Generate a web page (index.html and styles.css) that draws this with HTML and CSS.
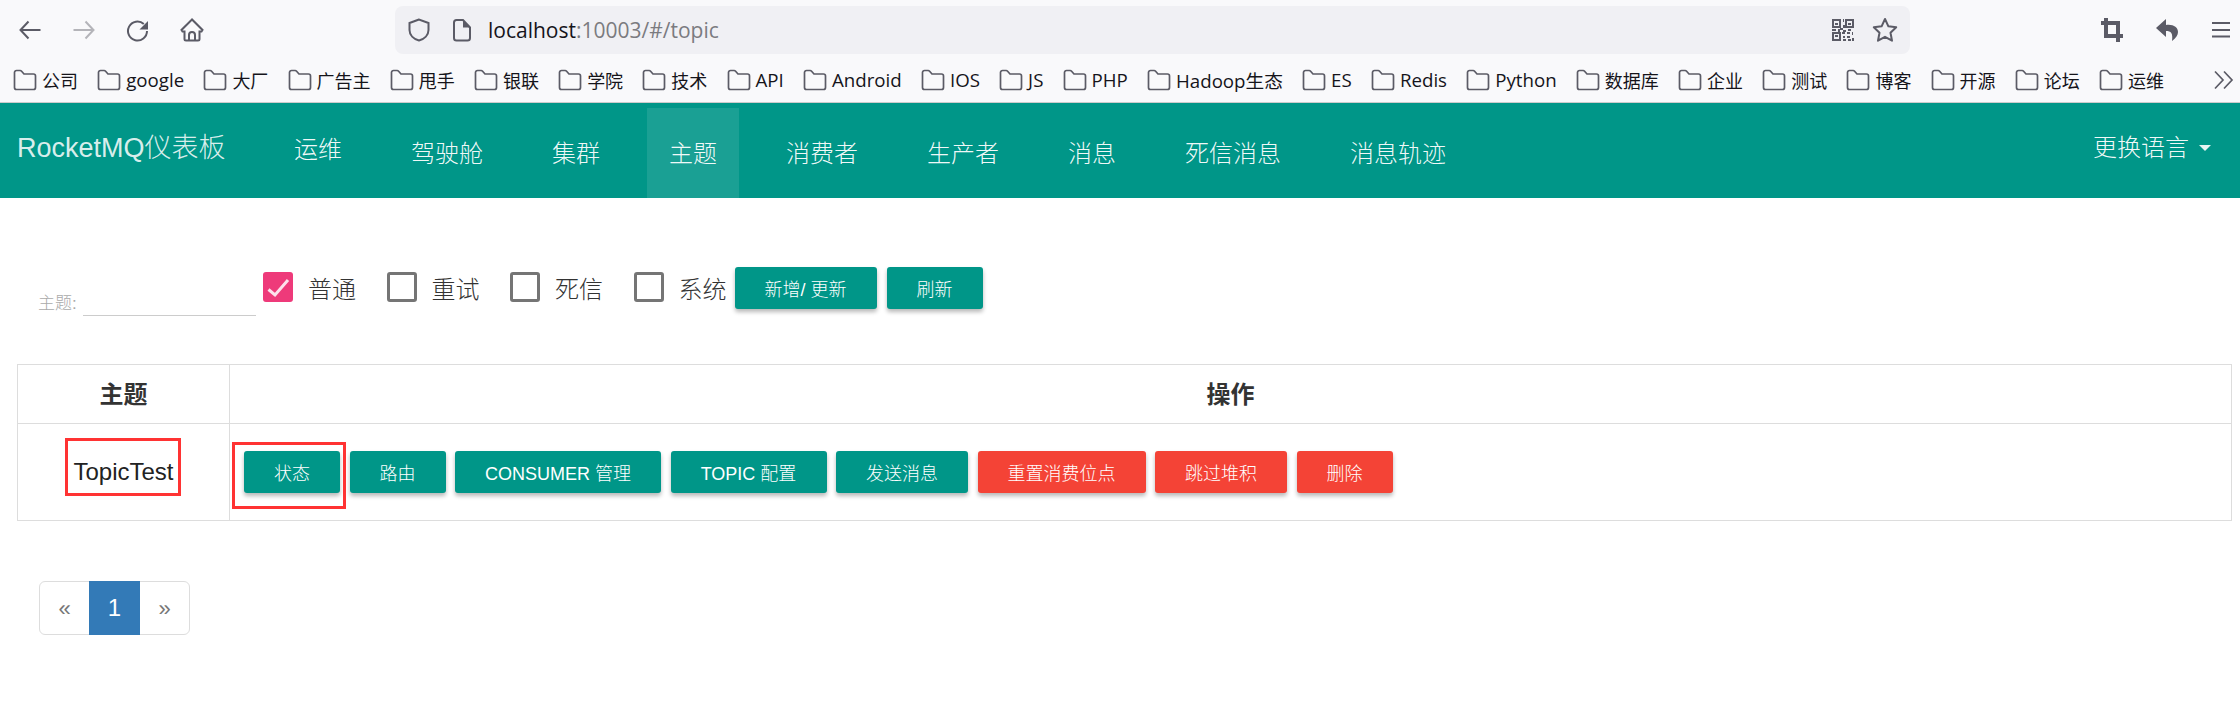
FILE: index.html
```html
<!DOCTYPE html>
<html lang="zh">
<head>
<meta charset="utf-8">
<title>RocketMQ</title>
<link rel="stylesheet" href="styles.css">
</head>
<body>
<svg class="defs" width="0" height="0">
  <symbol id="folder" viewBox="0 0 24 22"><path d="M1.500 5V18.500a2 2 0 0 0 2 2h17a2 2 0 0 0 2-2V7a2 2 0 0 0-2-2H11L8.600 2.200a2 2 0 0 0-1.500-.7H3.500a2 2 0 0 0-2 2Z" fill="none" stroke="#5b5b66" stroke-width="1.700"/></symbol>
</svg>
<div class="toolbar">
  <div class="navicons">
    <svg width="24" height="24" viewBox="0 0 24 24" fill="none" stroke="#5b5b66" stroke-width="2"><path d="M22.500 12H3M10.500 3.500 2.500 12l8 8.500"/></svg>
    <svg width="24" height="24" viewBox="0 0 24 24" fill="none" stroke="#b4b4b9" stroke-width="2"><path d="M1.500 12H21M13.500 3.500l8 8.500-8 8.500"/></svg>
    <svg width="24" height="24" viewBox="0 0 24 24"><path d="M21 13a9.500 9.500 0 1 1-3.200-7.100" fill="none" stroke="#5b5b66" stroke-width="2"/><path d="M22 3v8.500h-8.500Z" fill="#5b5b66"/></svg>
    <svg width="24" height="24" viewBox="0 0 24 24" fill="none" stroke="#5b5b66" stroke-width="2"><path d="M12 1.500 1.500 12l1 1.500H4.500V21a1.500 1.500 0 0 0 1.500 1.500h12a1.500 1.500 0 0 0 1.500-1.500v-7.500h2l1-1.500ZM9 22.500V17a3 3 0 0 1 6 0v5.500"/></svg>
  </div>
  <div class="urlbar">
    <svg class="shield" width="24" height="24" viewBox="0 0 24 24" fill="none" stroke="#5b5b66" stroke-width="2"><path d="M12 1.500 2.500 5v7c0 5 4 9 9.500 10.500 5.500-1.500 9.500-5.500 9.500-10.500V5Z"/></svg>
    <svg class="doc" width="20" height="24" viewBox="0 0 20 24"><path d="M2 4.500a2.500 2.500 0 0 1 2.500-2.500H11l7 7.500V20a2.500 2.500 0 0 1-2.500 2.500h-11A2.500 2.500 0 0 1 2 20Z" fill="none" stroke="#5b5b66" stroke-width="2"/><path d="M11 2l7 7.500h-7Z" fill="#5b5b66"/></svg>
    <div class="url"><span class="host">localhost</span>:10003/#/topic</div>
    <svg class="qr" width="22" height="24" viewBox="0 0 22 24" shape-rendering="crispEdges"><path fill="#5b5b66" d="M0 1h9v9H0Zm2 2v5h5V3Zm11-2h9v9h-9Zm2 2v5h5V3ZM0 14h9v9H0Zm2 2v5h5v-5Zm1-11h3v2H3Zm13 0h3v2h-3ZM3 17h3v2H3Zm8-16h1v3h-1Zm0 6h2v3h-2Zm-3 3h3v2H8Zm-8 1h4v2H0Zm6 0h2v3H6Zm5 1h3v2h-3Zm5-1h3v2h-3Zm-6 3h3v2h-3Zm5 0h3v2h-3Zm5 0h1v3h-1ZM11 18h2v2h-2Zm4 0h3v2h-3Zm5 2h2v3h-2Zm-9 1h3v2h-3Zm5 0h3v2h-3Z"/></svg>
    <svg class="star" width="26" height="26" viewBox="0 0 26 26" fill="none" stroke="#5b5b66" stroke-width="2"><path d="m13 2 3.400 7.300 7.800 1-5.700 5.500 1.500 7.900L13 19.800l-7 3.900 1.500-7.900L1.800 10.300l7.800-1Z" stroke-linejoin="round"/></svg>
  </div>
  <div class="tools">
    <svg width="22" height="24" viewBox="0 0 22 24" fill="none" stroke="#5b5b66" stroke-width="4"><path d="M5 0v18h17M0 5h17v19"/></svg>
    <svg width="22" height="24" viewBox="0 0 22 24" fill="#5b5b66"><path d="M10 1 0 10l10 9v-6c5 0 7 2 6 10 4-3 6-6 6-9 0-5-5-8-12-7Z"/></svg>
    <svg width="20" height="24" viewBox="0 0 20 24" fill="none" stroke="#5b5b66" stroke-width="2"><path d="M1 5h18M1 12h18M1 18.500h18"/></svg>
  </div>
</div>
<div class="bookmarks">
  <a class="bm"><svg class="fd"><use href="#folder"/></svg>公司</a>
  <a class="bm lat"><svg class="fd"><use href="#folder"/></svg>google</a>
  <a class="bm"><svg class="fd"><use href="#folder"/></svg>大厂</a>
  <a class="bm"><svg class="fd"><use href="#folder"/></svg>广告主</a>
  <a class="bm"><svg class="fd"><use href="#folder"/></svg>甩手</a>
  <a class="bm"><svg class="fd"><use href="#folder"/></svg>银联</a>
  <a class="bm"><svg class="fd"><use href="#folder"/></svg>学院</a>
  <a class="bm"><svg class="fd"><use href="#folder"/></svg>技术</a>
  <a class="bm lat"><svg class="fd"><use href="#folder"/></svg>API</a>
  <a class="bm lat"><svg class="fd"><use href="#folder"/></svg>Android</a>
  <a class="bm lat"><svg class="fd"><use href="#folder"/></svg>IOS</a>
  <a class="bm lat"><svg class="fd"><use href="#folder"/></svg>JS</a>
  <a class="bm lat"><svg class="fd"><use href="#folder"/></svg>PHP</a>
  <a class="bm lat"><svg class="fd"><use href="#folder"/></svg>Hadoop生态</a>
  <a class="bm lat"><svg class="fd"><use href="#folder"/></svg>ES</a>
  <a class="bm lat"><svg class="fd"><use href="#folder"/></svg>Redis</a>
  <a class="bm lat"><svg class="fd"><use href="#folder"/></svg>Python</a>
  <a class="bm"><svg class="fd"><use href="#folder"/></svg>数据库</a>
  <a class="bm"><svg class="fd"><use href="#folder"/></svg>企业</a>
  <a class="bm"><svg class="fd"><use href="#folder"/></svg>测试</a>
  <a class="bm"><svg class="fd"><use href="#folder"/></svg>博客</a>
  <a class="bm"><svg class="fd"><use href="#folder"/></svg>开源</a>
  <a class="bm"><svg class="fd"><use href="#folder"/></svg>论坛</a>
  <a class="bm"><svg class="fd"><use href="#folder"/></svg>运维</a>
  <svg class="more" width="20" height="20" viewBox="0 0 20 20" fill="none" stroke="#5b5b66" stroke-width="1.700"><path d="m1 1.500 8 8.500-8 8.500M10 1.500l8 8.500-8 8.500"/></svg>
</div>
<nav class="navbar">
  <div class="brand">RocketMQ仪表板</div>
  <ul class="menu">
    <li class="item first">运维</li>
    <li class="item">驾驶舱</li>
    <li class="item">集群</li>
    <li class="item active">主题</li>
    <li class="item">消费者</li>
    <li class="item">生产者</li>
    <li class="item">消息</li>
    <li class="item">死信消息</li>
    <li class="item">消息轨迹</li>
  </ul>
  <div class="lang">更换语言<span class="caret"></span></div>
</nav>
<main class="content">
  <div class="filters">
    <label class="topic-label">主题:</label>
    <span class="topic-input"></span>
    <div class="check"><span class="box on"><svg width="30" height="30" viewBox="0 0 30 30" fill="none" stroke="#fff" stroke-opacity=".85" stroke-width="3"><path d="M5.500 17.500 12 23 25 8"/></svg></span>普通</div>
    <div class="check"><span class="box"></span>重试</div>
    <div class="check"><span class="box"></span>死信</div>
    <div class="check last"><span class="box"></span>系统</div>
    <button class="btn teal w142">新增/ 更新</button>
    <button class="btn teal w96">刷新</button>
  </div>
  <table class="grid">
    <thead>
      <tr><th class="col-topic">主题</th><th>操作</th></tr>
    </thead>
    <tbody>
      <tr>
        <td class="cell-name"><span class="mark mark-name"></span>TopicTest</td>
        <td class="cell-actions">
          <div class="actions">
            <span class="mark mark-btn"></span>
            <button class="btn teal w96">状态</button>
            <button class="btn teal w96">路由</button>
            <button class="btn teal w206">CONSUMER 管理</button>
            <button class="btn teal w156">TOPIC 配置</button>
            <button class="btn teal w132">发送消息</button>
            <button class="btn red w168">重置消费位点</button>
            <button class="btn red w132">跳过堆积</button>
            <button class="btn red w96">删除</button>
          </div>
        </td>
      </tr>
    </tbody>
  </table>
  <div class="pager">
    <span class="pg">«</span>
    <span class="pg cur">1</span>
    <span class="pg">»</span>
  </div>
</main>
</body>
</html>
```

FILE: styles.css
```css
* { box-sizing: border-box; }
html, body { margin: 0; padding: 0; }
body {
  width: 2240px;
  height: 708px;
  overflow: hidden;
  background: #fff;
  font-family: "Liberation Sans", "Noto Sans CJK SC", sans-serif;
  color: #333;
}
.defs { position: absolute; }
.toolbar {
  display: flex;
  align-items: center;
  height: 54px;
  padding-top: 6px;
  background: #f9f9fb;
}
.navicons {
  display: flex;
  align-items: center;
  gap: 30px;
  width: 395px;
  padding-left: 18px;
}
.urlbar {
  display: flex;
  align-items: center;
  width: 1515px;
  height: 48px;
  border-radius: 8px;
  background: #f0f0f4;
  padding-left: 12px;
}
.doc { margin-left: 21px; }
.url {
  flex: 1;
  margin-left: 16px;
  font-family: "Open Sans", "Liberation Sans", sans-serif;
  font-size: 21px;
  color: #7b7b80;
}
.host { color: #15141a; }
.star { margin-left: 18px; margin-right: 12px; }
.tools {
  display: flex;
  align-items: center;
  gap: 33px;
  padding-left: 191px;
}
.bookmarks {
  display: flex;
  align-items: center;
  height: 49px;
  padding: 3px 0 0 13px;
  background: #f9f9fb;
  border-bottom: 1px solid #ccc;
  font-family: "Open Sans", "Noto Sans CJK SC", sans-serif;
  font-size: 18px;
  color: #15141a;
}
.bm {
  display: flex;
  align-items: center;
  gap: 5px;
  margin-right: 19.200px;
}
.bm.lat { font-size: 18.700px; }
.fd { width: 24px; height: 22px; }
.more { margin-left: auto; margin-right: 6px; }
.navbar {
  display: flex;
  align-items: flex-start;
  height: 95px;
  background: #009688;
  color: rgba(255, 255, 255, .95);
}
.brand {
  width: 272px;
  padding: 30px 0 0 17px;
  font-size: 27px;
  line-height: 30px;
  font-weight: 300;
  color: rgba(255, 255, 255, .86);
  white-space: nowrap;
}
.menu {
  display: flex;
  list-style: none;
  margin: 0;
  padding: 0;
}
.item {
  height: 90px;
  margin-top: 5px;
  margin-right: 25px;
  padding: 0 22px;
  font-size: 24px;
  font-weight: 300;
  line-height: 92px;
  white-space: nowrap;
}
.item.first { line-height: 84px; }
.item.active { background: rgba(255, 255, 255, .1); }
.lang {
  margin-left: auto;
  margin-right: 29px;
  font-size: 24px;
  font-weight: 300;
  line-height: 90px;
  display: flex;
  align-items: center;
}
.caret {
  margin-left: 10px;
  border-top: 6px solid rgba(255, 255, 255, .9);
  border-left: 6px solid transparent;
  border-right: 6px solid transparent;
}
.content { padding: 0 8px 0 17px; }
.filters {
  display: flex;
  align-items: flex-start;
  height: 48px;
  margin-top: 69px;
  padding-left: 21px;
}
.topic-label {
  margin-top: 27px;
  width: 45px;
  font-size: 17px;
  font-weight: 300;
  line-height: 20px;
  color: #aaa;
}
.topic-input {
  width: 173px;
  height: 49px;
  border-bottom: 1px solid #ccc;
  margin-right: 7px;
}
.check {
  display: flex;
  align-items: center;
  height: 30px;
  margin-top: 5px;
  margin-right: 30.500px;
  font-size: 24px;
  font-weight: 300;
  color: #333;
}
.check.last { margin-right: 8px; }
.box {
  width: 30px;
  height: 30px;
  margin-right: 15px;
  border: 3px solid #757575;
  border-radius: 3px;
}
.box.on {
  border: 0;
  background: #ee3a7a;
}
.box svg { display: block; }
.btn {
  height: 42px;
  padding: 0;
  border: 0;
  border-radius: 3px;
  font-family: inherit;
  font-size: 18px;
  font-weight: 300;
  color: #fff;
  box-shadow: 0 3px 4px rgba(0, 0, 0, .28);
}
.teal { background: #009688; }
.red { background: #f44336; }
.w96 { width: 96px; }
.w132 { width: 132px; }
.w142 { width: 142px; }
.w156 { width: 156px; }
.w168 { width: 168px; }
.w206 { width: 206px; }
.filters .btn { margin-right: 10px; }
.grid {
  width: 2215px;
  margin-top: 49px;
  border-collapse: collapse;
  table-layout: fixed;
}
.grid th, .grid td { border: 1px solid #ddd; padding: 0; text-align: center; }
.grid th {
  height: 59px;
  padding-bottom: 3px;
  font-size: 24px;
  font-weight: 700;
}
.col-topic { width: 212px; }
.grid td { height: 97px; }
.cell-name {
  position: relative;
  font-size: 24px;
  font-weight: 300;
  color: #222;
}
.cell-actions { position: relative; }
.actions {
  display: flex;
  gap: 9.500px;
  padding: 0 0 0 14px;
}
.mark {
  position: absolute;
  border: 3px solid #f33;
}
.mark-name { left: 47px; top: 14px; width: 116px; height: 58px; }
.mark-btn { left: 2px; top: 18px; width: 114px; height: 67px; }
.pager {
  display: inline-flex;
  margin: 60px 0 0 22px;
  border: 1px solid #ddd;
  border-radius: 6px;
  height: 54px;
}
.pg {
  width: 49px;
  text-align: center;
  font-size: 22px;
  line-height: 54px;
  color: #777;
}
.pg.cur {
  width: 51px;
  margin: -1px 0;
  background: #337ab7;
  color: #fff;
  font-size: 24px;
  line-height: 54px;
}
```
